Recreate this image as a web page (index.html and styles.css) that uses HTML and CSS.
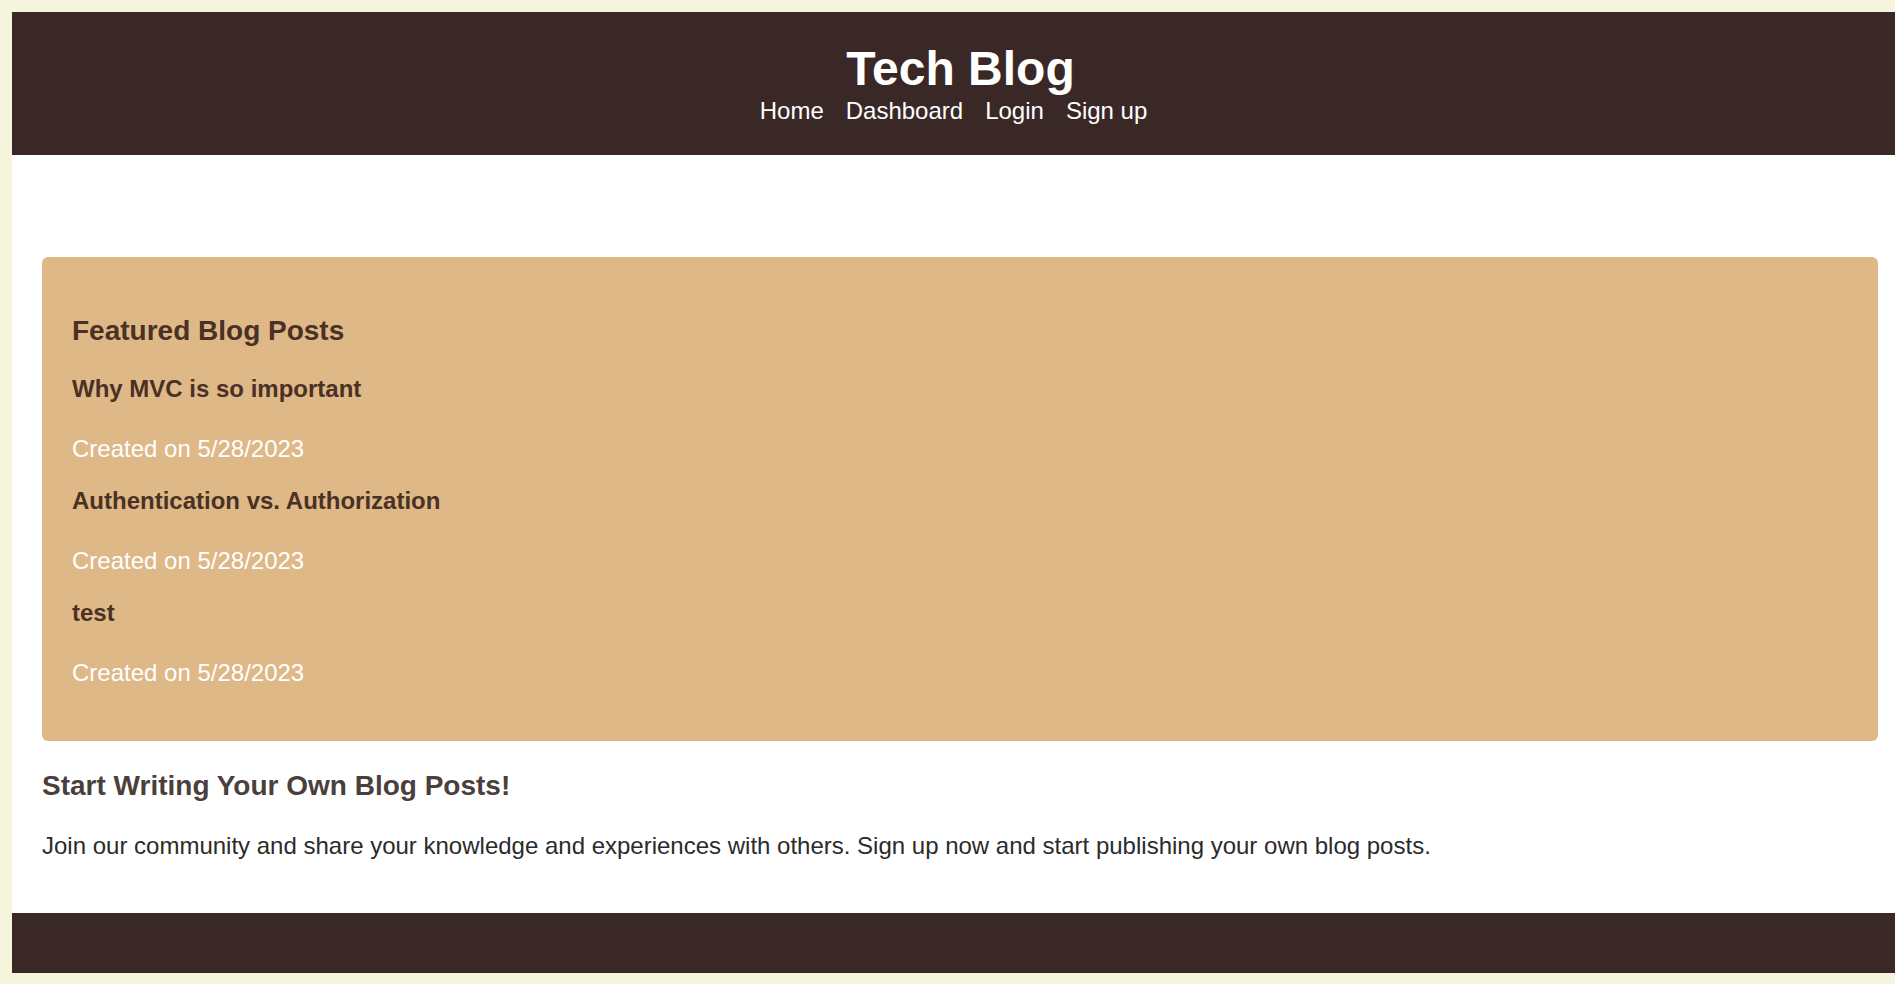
FILE: index.html
```html
<!DOCTYPE html>
<html lang="en">
<head>
<meta charset="utf-8">
<title>Tech Blog</title>
<link rel="stylesheet" href="styles.css">
</head>
<body>
<header class="site-header">
  <h1 class="site-title">Tech Blog</h1>
  <nav class="site-nav">
    <a href="#">Home</a>
    <a href="#">Dashboard</a>
    <a href="#">Login</a>
    <a href="#">Sign up</a>
  </nav>
</header>
<main class="main">
  <section class="featured">
    <h2 class="featured-title">Featured Blog Posts</h2>
    <article class="post">
      <h3 class="post-title">Why MVC is so important</h3>
      <p class="post-date">Created on 5/28/2023</p>
    </article>
    <article class="post">
      <h3 class="post-title">Authentication vs. Authorization</h3>
      <p class="post-date">Created on 5/28/2023</p>
    </article>
    <article class="post">
      <h3 class="post-title">test</h3>
      <p class="post-date">Created on 5/28/2023</p>
    </article>
  </section>
  <section class="cta">
    <h2 class="cta-title">Start Writing Your Own Blog Posts!</h2>
    <p class="cta-text">Join our community and share your knowledge and experiences with others. Sign up now and start publishing your own blog posts.</p>
  </section>
</main>
<footer class="site-footer"></footer>
</body>
</html>
```

FILE: styles.css
```css
html, body {
  background: #f5f5dc;
}
body {
  margin: 12px 0 11px 12px;
  font-family: "Liberation Sans", Arial, sans-serif;
  font-size: 24px;
  color: #2b2b2b;
}
.site-header {
  background: #3a2826;
  color: #ffffff;
  text-align: center;
  padding: 30px 0 31px;
}
.site-title {
  margin: 0;
  padding-left: 14px;
  font-size: 48px;
  line-height: 54px;
  font-weight: bold;
}
.site-nav {
  margin-top: 1px;
  line-height: 27px;
  display: flex;
  justify-content: center;
  gap: 22px;
}
.site-nav a {
  color: #ffffff;
  text-decoration: none;
}
.main {
  background: #ffffff;
  padding: 102px 17px 54px 30px;
}
.featured {
  background: #deb887;
  border-radius: 6px;
  padding: 58px 30px 55px;
  display: flex;
  flex-direction: column;
  gap: 25px;
}
.featured-title {
  margin: 0 0 3px;
  font-size: 28px;
  line-height: 32px;
  color: #4a3124;
}
.post-title {
  margin: 0;
  font-size: 24px;
  line-height: 27px;
  color: #4a3124;
}
.post-date {
  margin: 33px 0 0;
  line-height: 27px;
  color: #ffffff;
}
.cta {
  padding-top: 29px;
}
.cta-title {
  margin: 0;
  font-size: 28px;
  line-height: 32px;
  color: #4b3f3c;
}
.cta-text {
  margin: 30px 0 0;
  line-height: 27px;
  color: #2b2b2b;
}
.site-footer {
  background: #3a2826;
  height: 60px;
}
```
